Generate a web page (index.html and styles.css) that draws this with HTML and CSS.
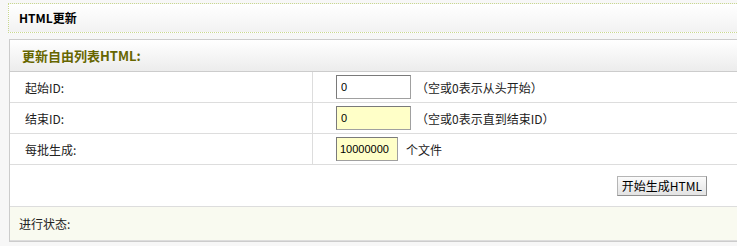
FILE: index.html
```html
<!DOCTYPE html>
<html lang="zh-CN">
<head>
    <meta charset="UTF-8">
    <title>HTML更新</title>
    <link rel="stylesheet" href="styles.css">
</head>
<body>
    <div class="page-title">HTML更新</div>
    <div class="panel">
        <div class="panel-head">更新自由列表HTML:</div>
        <table class="form">
            <tr class="row-1">
                <td class="label">起始ID:</td>
                <td class="field"><input class="text" type="text" value="0"><span class="hint">（空或0表示从头开始）</span></td>
            </tr>
            <tr class="row-2">
                <td class="label">结束ID:</td>
                <td class="field"><input class="text yellow" type="text" value="0"><span class="hint">（空或0表示直到结束ID）</span></td>
            </tr>
            <tr class="row-3">
                <td class="label">每批生成:</td>
                <td class="field"><input class="text yellow short" type="text" value="10000000"><span class="hint unit">个文件</span></td>
            </tr>
            <tr class="row-btn">
                <td colspan="2"><button class="btn">开始生成HTML</button></td>
            </tr>
            <tr class="row-status">
                <td colspan="2">进行状态:</td>
            </tr>
        </table>
    </div>
</body>
</html>
```

FILE: styles.css
```css
body {
    margin: 0;
    padding: 3px 0 0 8px;
    background-color: #f7f7f7;
    font-family: "Noto Sans CJK SC", "DejaVu Sans", sans-serif;
    font-size: 12px;
    color: #222;
    overflow: hidden;
}
.page-title {
    height: 28px;
    line-height: 28px;
    border: 1px dotted #c9d88f;
    border-right: none;
    background: linear-gradient(#ffffff, #f2f2f2);
    padding-left: 10px;
    font-weight: bold;
    color: #000;
}
.panel {
    margin: 6px 0 0 1px;
    border: 1px solid #cccccc;
    border-right: none;
    background-color: #fff;
}
.panel-head {
    height: 31px;
    line-height: 31px;
    padding-left: 12px;
    background: linear-gradient(#ffffff, #ececec);
    border-bottom: 1px solid #cccccc;
    color: #666600;
    font-weight: bold;
    font-size: 13px;
}
.form {
    width: 100%;
    border-collapse: collapse;
}
.form td {
    border-bottom: 1px solid #dddddd;
    padding: 0;
}
.form .label {
    width: 287px;
    padding-left: 15px;
    border-right: 1px solid #dddddd;
}
.row-1 td { height: 30px; }
.row-2 td { height: 30px; }
.row-3 td { height: 30px; }
.form .field {
    padding-left: 23px;
}
.text {
    box-sizing: border-box;
    width: 75px;
    height: 24px;
    margin: 0;
    padding: 0 4px;
    border: 1px solid #a0a0a0;
    border-top-color: #7a7a7a;
    border-left-color: #7a7a7a;
    background-color: #fff;
    font-family: "Liberation Sans", sans-serif;
    font-size: 11px;
    color: #000;
    vertical-align: middle;
}
.text.yellow { background-color: #ffffc8; }
.text.short { width: 62px; padding: 0 3px; }
.hint {
    margin-left: 5px;
    vertical-align: middle;
}
.hint.unit { margin-left: 8px; }
.row-btn td {
    height: 41px;
    text-align: right;
    padding-right: 30px;
}
.btn {
    height: 20px;
    padding: 0 4px;
    margin-top: 1px;
    border: 1px solid #b5b5b5;
    border-right-color: #8f8f8f;
    border-bottom-color: #8f8f8f;
    background: linear-gradient(#fbfbfb, #e3e3e3);
    font-family: "Noto Sans CJK SC", sans-serif;
    font-size: 12px;
    color: #000;
    line-height: 16px;
}
.row-status td {
    height: 33px;
    padding-left: 9px;
    background-color: #f9faf0;
}
```
